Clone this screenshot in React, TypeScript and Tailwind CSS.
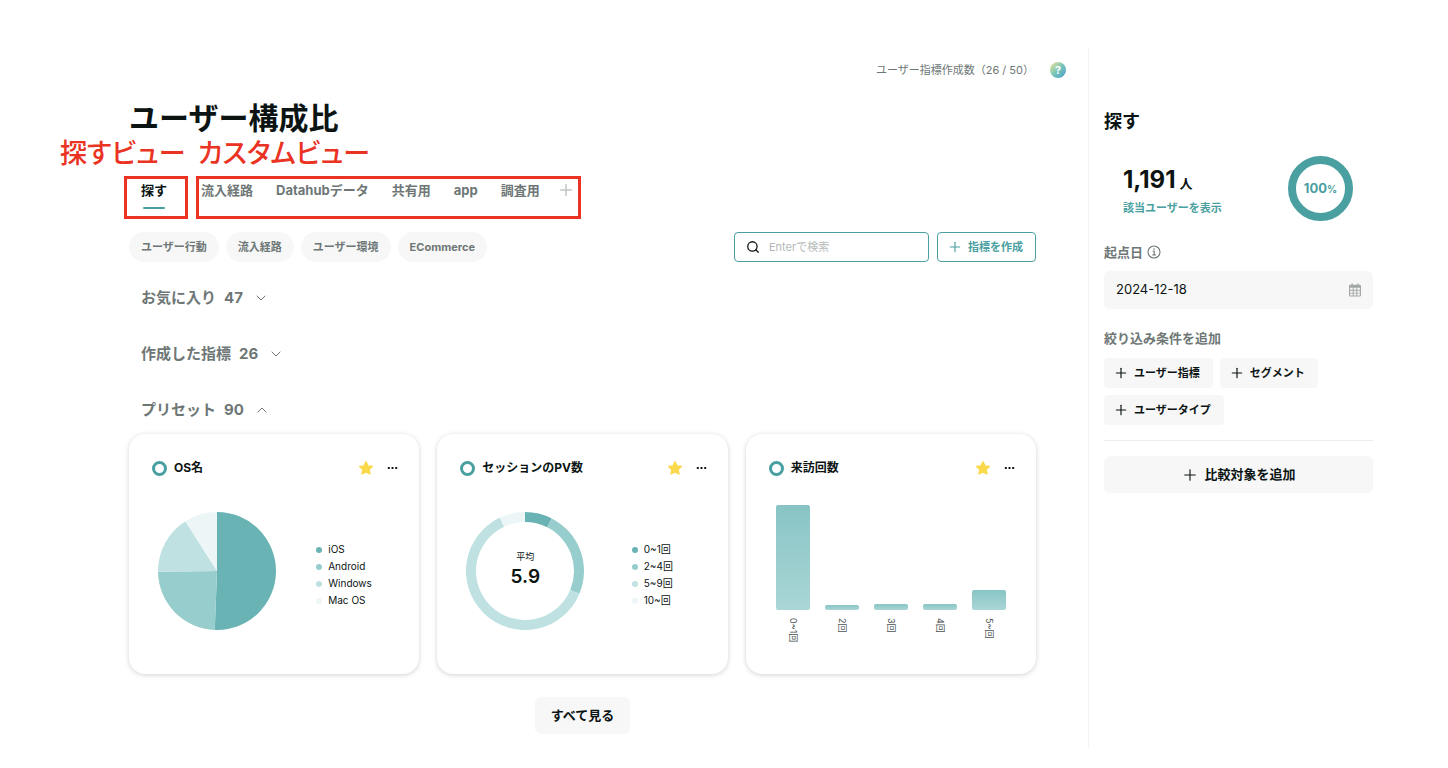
import React, { useState } from 'react';
import { ChevronDown, ChevronUp, Plus, Search } from 'lucide-react';

interface Segment {
  label: string;
  value: number;
  color: string;
}

const customTabs = ['流入経路', 'Datahubデータ', '共有用', 'app', '調査用'];
const categories = ['ユーザー行動', '流入経路', 'ユーザー環境', 'ECommerce'];

const osData: Segment[] = [
  { label: 'iOS', value: 50.6, color: '#69b3b5' },
  { label: 'Android', value: 24.2, color: '#98cdcd' },
  { label: 'Windows', value: 16.2, color: '#bfe1e2' },
  { label: 'Mac OS', value: 9, color: '#edf6f7' },
];

const pvData: Segment[] = [
  { label: '0~1回', value: 7.5, color: '#69b3b5' },
  { label: '2~4回', value: 23.8, color: '#98cdcd' },
  { label: '5~9回', value: 61.7, color: '#bfe1e2' },
  { label: '10~回', value: 7, color: '#edf6f7' },
];

const visitData = [
  { label: '0~1回', height: 105 },
  { label: '2回', height: 5 },
  { label: '3回', height: 6 },
  { label: '4回', height: 6 },
  { label: '5~回', height: 20 },
];

function point(percent: number, r: number) {
  const angle = (percent / 100) * Math.PI * 2;
  return `${59 + r * Math.sin(angle)} ${59 - r * Math.cos(angle)}`;
}

function PieChart({ data, inner = 0 }: { data: Segment[]; inner?: number }) {
  let start = 0;
  return (
    <svg className="w-[118px] h-[118px]" viewBox="0 0 118 118">
      {data.map(({ label, value, color }) => {
        const end = start + value;
        const large = value > 50 ? 1 : 0;
        const d = `M${point(start, 59)}A59 59 0 ${large} 1 ${point(end, 59)}L${point(end, inner)}A${inner} ${inner} 0 ${large} 0 ${point(start, inner)}Z`;
        start = end;
        return <path key={label} d={d} fill={color} />;
      })}
    </svg>
  );
}

function Legend({ data }: { data: Segment[] }) {
  return (
    <div className="w-[136px] flex justify-center">
      <ul className="text-[10px] leading-[17px] mt-2">
        {data.map(({ label, color }) => (
          <li key={label} className="flex items-center gap-[6px]">
            <span className="w-[6px] h-[6px] rounded-full" style={{ backgroundColor: color }} />
            {label}
          </li>
        ))}
      </ul>
    </div>
  );
}

function Card({ title, children }: { title: string; children: React.ReactNode }) {
  return (
    <article className="h-[240px] rounded-2xl bg-white shadow-[0_1px_5px_rgba(0,0,0,0.18)]">
      <div className="flex items-center h-5 mt-6 pl-[23px] pr-[21px]">
        <span className="w-[15px] h-[15px] rounded-full border-[3px] border-[#4aa0a1]" />
        <h3 className="ml-[7px] text-xs leading-5 font-bold">{title}</h3>
        <button aria-label="お気に入り" className="ml-auto">
          <svg className="w-[14px] h-[14px]" viewBox="0 0 14 14" fill="#fad94b" stroke="#fad94b" strokeWidth="1.4" strokeLinejoin="round">
            <path d="M7 .8 8.9 4.9 13.3 5.4 10.1 8.5 11 13 7 10.8 3 13 3.9 8.5.7 5.4 5.1 4.9Z" />
          </svg>
        </button>
        <button aria-label="メニュー" className="ml-[14px]">
          <svg className="w-[11px] h-[14px]" viewBox="0 0 11 14" fill="#0b1413">
            <rect x="0.8" y="6" width="2" height="2" rx="0.5" />
            <rect x="4.5" y="6" width="2" height="2" rx="0.5" />
            <rect x="8.2" y="6" width="2" height="2" rx="0.5" />
          </svg>
        </button>
      </div>
      {children}
    </article>
  );
}

function SectionToggle({ title, count, open = false }: { title: string; count: number; open?: boolean }) {
  const Icon = open ? ChevronUp : ChevronDown;
  return (
    <button aria-expanded={open} className="flex items-center h-5 pl-3 text-[15px] leading-5 font-bold text-[#6e7776]">
      <span>{title}</span>
      <span className="ml-2">{count}</span>
      <Icon className="ml-[10px] w-4 h-4" strokeWidth={1.5} />
    </button>
  );
}

function ConditionButton({ label }: { label: string }) {
  return (
    <button className="flex items-center h-[30px] gap-[5px] pl-[9px] pr-[13px] rounded bg-[#f7f7f7] text-[11px] font-bold">
      <Plus className="w-4 h-4" strokeWidth={1.75} />
      {label}
    </button>
  );
}

function Sidebar() {
  const [date, setDate] = useState('2024-12-18');

  return (
    <aside className="w-[360px] shrink-0 h-[700px] pl-[15px] pr-[75px] border-l border-[#f3f3f3]">
      <h2 className="mt-[61px] text-lg leading-[26px] font-bold">探す</h2>
      <div className="flex items-center justify-between mt-[21px] pl-[19px] pr-5">
        <div className="pt-[6px]">
          <p className="flex items-baseline gap-1 h-7 leading-7 font-bold">
            <span className="text-2xl leading-7">1,191</span>
            <span className="text-[13px]">人</span>
          </p>
          <a href="#" className="block mt-1 text-[11px] leading-5 font-bold text-[#4aa0a1]">該当ユーザーを表示</a>
        </div>
        <div className="w-[65px] h-[65px] flex items-center justify-center rounded-full border-[8px] border-[#4aa0a1] text-[#4aa0a1]">
          <span className="text-[13px] leading-4 font-bold">100<span className="text-[10px]">%</span></span>
        </div>
      </div>
      <div className="flex items-center gap-1 mt-[21px] text-[13px] leading-5 font-bold text-[#6e7776]">
        <label htmlFor="base-date">起点日</label>
        <svg className="w-[14px] h-[14px]" viewBox="0 0 14 14" fill="none" stroke="currentColor">
          <circle cx="7" cy="7" r="6" strokeWidth="1.1" />
          <path d="M5.6 6.2H7.2V9.8M5.4 9.9H8.8" strokeWidth="1.1" />
          <circle cx="7" cy="4.1" r=".8" fill="currentColor" stroke="none" />
        </svg>
      </div>
      <div className="flex items-center h-[38px] mt-[9px] px-3 rounded-md bg-[#f7f7f7]">
        <input
          id="base-date"
          type="text"
          value={date}
          onChange={e => setDate(e.target.value)}
          className="flex-1 min-w-0 text-[13px] bg-transparent focus:outline-none"
        />
        <svg className="w-3 h-[14px]" viewBox="0 0 12 14" fill="#a3a7a6">
          <path d="M2.5 .5h1.3v1.2h4.4V.5h1.3v1.2h1.2Q12 1.7 12 3v9.2Q12 13.5 10.7 13.5H1.3Q0 13.5 0 12.2V3Q0 1.7 1.3 1.7h1.2Z" />
          <path fill="#f7f7f7" d="M1.1 4.8h2.6v2H1.1zM4.7 4.8h2.6v2H4.7zM8.3 4.8h2.6v2H8.3zM1.1 7.7h2.6v2H1.1zM4.7 7.7h2.6v2H4.7zM8.3 7.7h2.6v2H8.3zM1.1 10.6h2.6v1.8H1.1zM4.7 10.6h2.6v1.8H4.7zM8.3 10.6h2.6v1.8H8.3z" />
        </svg>
      </div>
      <h3 className="mt-[19px] text-[13px] leading-5 font-bold text-[#6e7776]">絞り込み条件を追加</h3>
      <div className="flex flex-wrap gap-[7px] mt-[10px]">
        <ConditionButton label="ユーザー指標" />
        <ConditionButton label="セグメント" />
        <ConditionButton label="ユーザータイプ" />
      </div>
      <hr className="mt-[15px] border-[#ececec]" />
      <button className="w-full h-[37px] flex items-center justify-center gap-[5px] mt-[15px] rounded-md bg-[#f7f7f7] text-[13px] font-bold">
        <Plus className="w-[18px] h-[18px]" strokeWidth={1.5} />
        比較対象を追加
      </button>
    </aside>
  );
}

export default function App() {
  const [searchTerm, setSearchTerm] = useState('');

  return (
    <div lang="ja" className="flex pt-12 min-h-screen bg-white text-[#0b1413] font-['Inter','Noto_Sans_CJK_JP',sans-serif]">
      <main className="flex-1 min-w-0 pl-[129px] pr-[52px]">
        <div className="flex items-center justify-end h-11 -mr-[30px] text-[11px] text-[#6e7776]">
          <span>ユーザー指標作成数（26 / 50）</span>
          <button aria-label="ヘルプ" className="w-4 h-4 ml-4 rounded-full bg-linear-135 from-[#f1e38f] via-[#77c5b8] to-[#4b9bd0] text-white text-[11px] leading-4 font-bold">?</button>
        </div>
        <h1 className="text-[30px] leading-[52px] font-bold">ユーザー構成比</h1>

        <nav className="relative flex h-[42px] mt-8 pl-3 text-[13px] leading-7">
          {/* callouts drawn over the two tab groups */}
          <div className="absolute -left-[69px] -top-[44px] flex gap-3 text-[27px] leading-[44px] font-medium text-[#ea3323] whitespace-nowrap [font-feature-settings:'palt']">
            <span>探すビュー</span>
            <span>カスタムビュー</span>
          </div>
          <div className="absolute -left-[5px] top-0 w-[64px] h-[43px] border-3 border-[#ea3323] pointer-events-none" />
          <div className="absolute left-[67px] top-0 w-[385px] h-[43px] border-3 border-[#ea3323] pointer-events-none" />

          <button className="flex flex-col items-center font-bold">
            <span>探す</span>
            <span className="w-[22px] h-[2px] mt-[3px] rounded-full bg-[#4aa0a1]" />
          </button>
          <div className="w-px h-4 ml-[18px] mr-[15px] mt-1 bg-[#dfe3e3]" />
          <div className="flex items-start gap-[23px] font-bold text-[#6e7776]">
            {customTabs.map(tab => (
              <button key={tab}>{tab}</button>
            ))}
          </div>
          <button aria-label="ビューを追加" className="h-7 ml-[17px] text-[#bfc4c3]">
            <Plus className="w-[18px] h-[18px]" strokeWidth={2} />
          </button>
        </nav>

        <div className="flex items-center gap-2 mt-[14px]">
          <div className="flex gap-[7px]">
            {categories.map(item => (
              <button key={item} className="h-[30px] px-3 rounded-full bg-[#f7f7f7] text-[11px] font-bold text-[#6e7776] whitespace-nowrap">
                {item}
              </button>
            ))}
          </div>
          <div className="flex items-center w-[195px] h-[30px] ml-auto pl-[11px] border border-[#4aa0a1] rounded">
            <Search className="w-[14px] h-[14px]" strokeWidth={2.2} />
            <input
              type="text"
              aria-label="検索"
              value={searchTerm}
              onChange={e => setSearchTerm(e.target.value)}
              placeholder="Enterで検索"
              className="flex-1 min-w-0 ml-[9px] text-[11px] placeholder-[#b4b9b8] focus:outline-none"
            />
          </div>
          <button className="flex items-center h-[30px] gap-[5px] pl-[9px] pr-3 border border-[#4aa0a1] rounded text-[11px] font-bold text-[#4aa0a1] whitespace-nowrap">
            <Plus className="w-4 h-4" strokeWidth={1.75} />
            指標を作成
          </button>
        </div>

        <div className="flex flex-col items-start gap-9 mt-[26px]">
          <SectionToggle title="お気に入り" count={47} />
          <SectionToggle title="作成した指標" count={26} />
          <SectionToggle title="プリセット" count={90} open />
        </div>

        <section className="grid grid-cols-3 gap-[18px] mt-[14px]">
          <Card title="OS名">
            <div className="flex items-center mt-[34px] pl-[29px]">
              <PieChart data={osData} />
              <Legend data={osData} />
            </div>
          </Card>
          <Card title="セッションのPV数">
            <div className="flex items-center mt-[34px] pl-[29px]">
              <div className="relative">
                <PieChart data={pvData} inner={49} />
                <div className="absolute inset-0 flex flex-col items-center justify-center pb-1">
                  <span className="text-[9px] leading-4">平均</span>
                  <span className="text-[19px] leading-6 font-semibold">5.9</span>
                </div>
              </div>
              <Legend data={pvData} />
            </div>
          </Card>
          <Card title="来訪回数">
            <div className="flex items-end h-[105px] gap-[15px] mt-[27px] px-[30px]">
              {visitData.map(({ label, height }) => (
                <div key={label} className="flex-1 rounded-xs bg-linear-to-b from-[#88c4c5] to-[#aad6d6]" style={{ height }} />
              ))}
            </div>
            <div className="flex gap-[15px] mt-2 px-[30px] text-[9px] leading-3 text-[#4b5352]">
              {visitData.map(({ label }) => (
                <div key={label} className="flex-1 flex justify-center">
                  <span className="[writing-mode:vertical-rl] [text-orientation:sideways]">{label}</span>
                </div>
              ))}
            </div>
          </Card>
        </section>

        <div className="flex justify-center mt-[23px]">
          <button className="h-[37px] px-4 rounded-md bg-[#f7f7f7] text-[13px] font-bold">すべて見る</button>
        </div>
      </main>
      <Sidebar />
    </div>
  );
}
